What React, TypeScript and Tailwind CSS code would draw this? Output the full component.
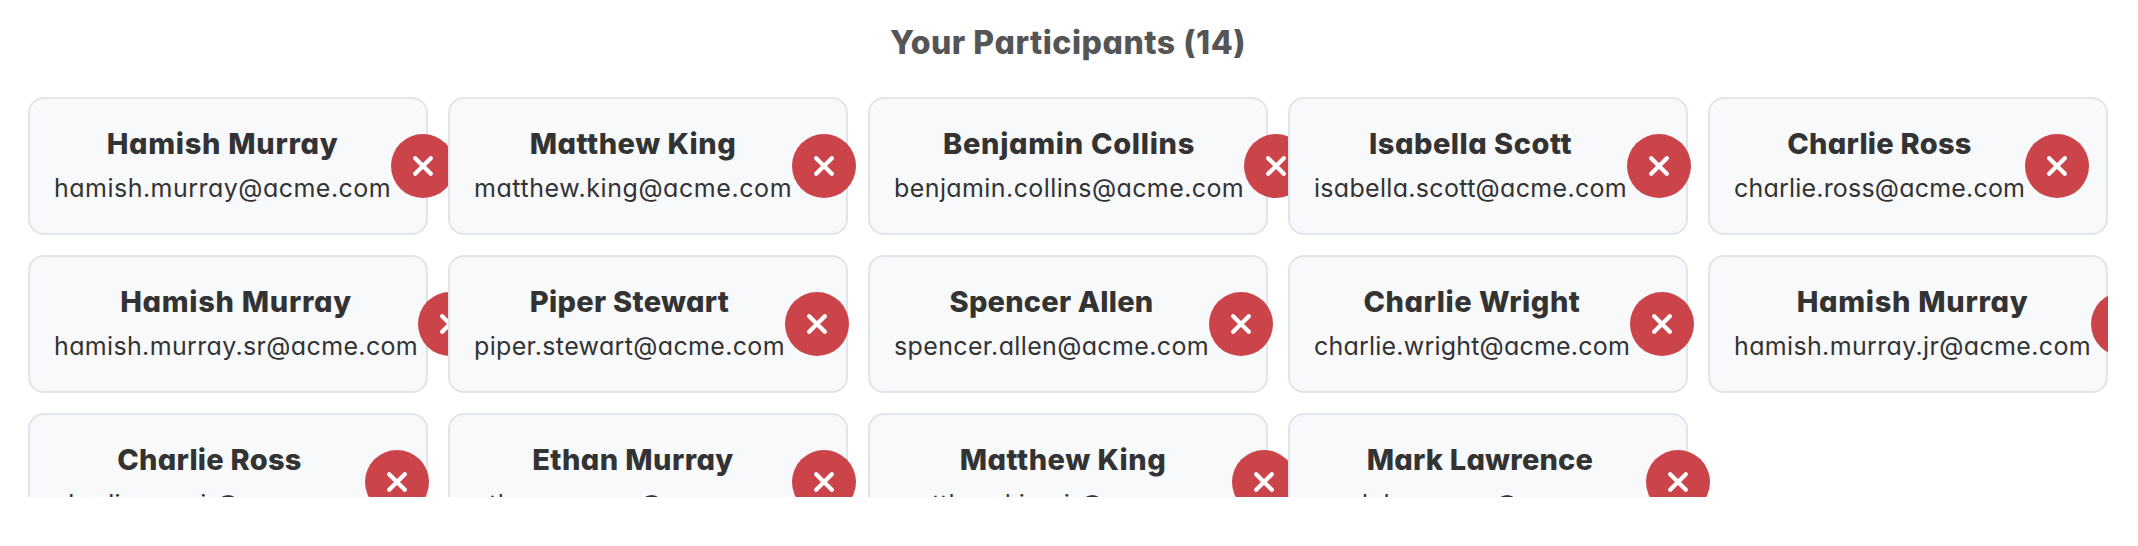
type Participant = {
  name: string;
  email: string;
  width: string;
  nameTracking: string;
  emailTracking: string;
};

const participants: Participant[] = [
  { name: "Hamish Murray", email: "hamish.murray@acme.com", width: "w-[337px]", nameTracking: "tracking-[0.7px]", emailTracking: "tracking-[0.48px]" },
  { name: "Matthew King", email: "matthew.king@acme.com", width: "w-[318px]", nameTracking: "tracking-[0.5px]", emailTracking: "tracking-[0.57px]" },
  { name: "Benjamin Collins", email: "benjamin.collins@acme.com", width: "w-[350px]", nameTracking: "tracking-[0.7px]", emailTracking: "tracking-[0.41px]" },
  { name: "Isabella Scott", email: "isabella.scott@acme.com", width: "w-[313px]", nameTracking: "tracking-[0.5px]", emailTracking: "tracking-[0.31px]" },
  { name: "Charlie Ross", email: "charlie.ross@acme.com", width: "w-[291px]", nameTracking: "tracking-[0.26px]", emailTracking: "tracking-[0.2px]" },
  { name: "Hamish Murray", email: "hamish.murray.sr@acme.com", width: "w-[364px]", nameTracking: "tracking-[0.7px]", emailTracking: "tracking-[0.35px]" },
  { name: "Piper Stewart", email: "piper.stewart@acme.com", width: "w-[311px]", nameTracking: "tracking-[0.3px]", emailTracking: "tracking-[0.34px]" },
  { name: "Spencer Allen", email: "spencer.allen@acme.com", width: "w-[315px]", nameTracking: "tracking-[0.2px]", emailTracking: "tracking-[0.36px]" },
  { name: "Charlie Wright", email: "charlie.wright@acme.com", width: "w-[316px]", nameTracking: "tracking-[0.53px]", emailTracking: "tracking-[0.21px]" },
  { name: "Hamish Murray", email: "hamish.murray.jr@acme.com", width: "w-[357px]", nameTracking: "tracking-[0.7px]", emailTracking: "tracking-[0.35px]" },
  { name: "Charlie Ross", email: "charlie.ross.jr@acme.com", width: "w-[311px]", nameTracking: "tracking-[0.26px]", emailTracking: "tracking-[0.05px]" },
  { name: "Ethan Murray", email: "ethan.murray@acme.com", width: "w-[318px]", nameTracking: "tracking-[0.42px]", emailTracking: "tracking-[0.46px]" },
  { name: "Matthew King", email: "matthew.king.jr@acme.com", width: "w-[338px]", nameTracking: "tracking-[0.5px]", emailTracking: "tracking-[0.38px]" },
  { name: "Mark Lawrence", email: "mark.lawrence@acme.com", width: "w-[332px]", nameTracking: "tracking-[0.2px]", emailTracking: "tracking-[0.29px]" },
];

function RemoveButton({ name }: { name: string }) {
  return (
    <button
      type="button"
      aria-label={`Remove ${name}`}
      className="flex size-16 shrink-0 items-center justify-center rounded-full bg-[#cb444a] text-white"
    >
      <svg viewBox="0 0 20 20" className="size-5" fill="none" stroke="currentColor" strokeWidth="4.2" strokeLinecap="round">
        <path d="M2.2 2.2 17.8 17.8M17.8 2.2 2.2 17.8" />
      </svg>
    </button>
  );
}

function ParticipantCard({ person }: { person: Participant }) {
  return (
    <li className="flex h-[138px] min-w-0 items-center rounded-2xl border-2 border-[#e1e4e9] bg-[#f8f9fb] px-6 text-[#333333]">
      <div className={`h-[86px] shrink-0 whitespace-nowrap text-center ${person.width}`}>
        <h3 className={`text-[29px] font-extrabold leading-[42px] ${person.nameTracking}`}>{person.name}</h3>
        <p className={`mt-1 text-left text-[25px] leading-[38px] ${person.emailTracking}`}>{person.email}</p>
      </div>
      <RemoveButton name={person.name} />
    </li>
  );
}

export default function App() {
  return (
    <main className="h-[546px] bg-white pl-7 pr-[30px] pt-[19px] font-['Inter',sans-serif] [font-feature-settings:'cv11']">
      <h2 className="mb-[30px] text-center text-[32px] font-extrabold leading-[48px] tracking-[0.53px] text-[#555555]">
        Your Participants ({participants.length})
      </h2>
      <ul className="grid h-[400px] grid-cols-5 content-start gap-5 overflow-hidden">
        {participants.map((person) => (
          <ParticipantCard key={person.email} person={person} />
        ))}
      </ul>
    </main>
  );
}
